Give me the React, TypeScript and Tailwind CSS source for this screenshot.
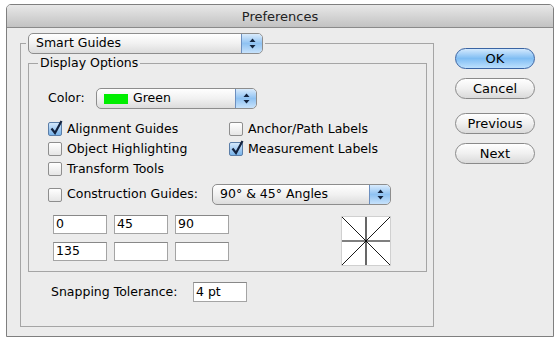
import React from "react";

function Arrows() {
  return (
    <span className="flex h-full w-[21px] shrink-0 items-center justify-center rounded-r-[4px] border-l border-[#6c8fbf] bg-gradient-to-b from-[#d9ebfc] via-[#8fc2f2] to-[#c7e2fb]">
      <svg width="7" height="11" viewBox="0 0 7 11">
        <path d="M3.5 0.5 L6.5 4 L0.5 4 Z" fill="#13233d" />
        <path d="M3.5 10.5 L6.5 7 L0.5 7 Z" fill="#13233d" />
      </svg>
    </span>
  );
}

function Popup({ width, children }: { width: string; children: React.ReactNode }) {
  return (
    <div
      className={`${width} flex h-[21px] items-stretch overflow-hidden rounded-[5px] border border-[#8d8d8d] bg-gradient-to-b from-white via-[#f1f1f1] to-[#dcdcdc]`}
    >
      <div className="flex flex-1 items-center gap-[5px] pl-[7px]">{children}</div>
      <Arrows />
    </div>
  );
}

function Checkbox({ checked }: { checked?: boolean }) {
  if (checked) {
    return (
      <span className="relative h-[14px] w-[14px] shrink-0 rounded-[2px] border border-[#5b7ea8] bg-gradient-to-b from-[#d4e8fb] to-[#78b3ea]">
        <svg className="absolute left-[1px] top-[-3px]" width="13" height="15" viewBox="0 0 13 15">
          <path d="M1.5 8.5 L5 13 L11.5 1" fill="none" stroke="#14233f" strokeWidth="2.2" />
        </svg>
      </span>
    );
  }
  return (
    <span className="h-[14px] w-[14px] shrink-0 rounded-[2px] border border-[#8e8e8e] bg-gradient-to-b from-white to-[#e6e6e6]" />
  );
}

function Check({ checked, label }: { checked?: boolean; label: string }) {
  return (
    <div className="flex h-[20px] items-center gap-[5px]">
      <Checkbox checked={checked} />
      <span>{label}</span>
    </div>
  );
}

function Field({ value }: { value?: string }) {
  return (
    <div className="flex h-[19px] w-[54px] items-center border border-[#a4a4a4] border-t-[#888] bg-white pl-[2px]">
      {value}
    </div>
  );
}

function Button({ label, primary }: { label: string; primary?: boolean }) {
  return (
    <div
      className={
        primary
          ? "flex h-[21px] w-[80px] items-center justify-center rounded-full border border-[#3a64a3] bg-gradient-to-b from-[#d3e9fd] via-[#7fbdf3] to-[#bde0fd] text-[13px]"
          : "flex h-[21px] w-[80px] items-center justify-center rounded-full border border-[#8a8a8a] bg-gradient-to-b from-white via-[#f0f0f0] to-[#dadada] text-[13px]"
      }
    >
      {label}
    </div>
  );
}

export default function App() {
  return (
    <div className="h-[343px] w-[558px] bg-white pl-[6px] pt-[4px] font-['DejaVu_Sans',sans-serif] text-[12.5px] leading-none text-black">
      <div className="flex h-[333px] w-[548px] flex-col overflow-hidden rounded-t-[5px] border border-[#7f7f7f] bg-[#ececec]">
        <div className="flex h-[23px] shrink-0 items-center justify-center border-b border-[#8a8a8a] bg-gradient-to-b from-[#e8e8e8] to-[#c2c2c2] text-[13px] text-[#222]">
          Preferences
        </div>

        <div className="flex flex-1">
          {/* Smart Guides group */}
          <fieldset className="ml-[13px] mt-[5px] h-[294px] w-[414px] border border-[#a5a5a5]">
            <legend className="ml-[5px] px-[2px]">
              <Popup width="w-[235px]">
                <span>Smart Guides</span>
              </Popup>
            </legend>

            <fieldset className="ml-[7px] mt-[1px] h-[217px] w-[399px] border border-[#a5a5a5]">
              <legend className="ml-[9px] px-[2px] leading-[16px]">Display Options</legend>

              <div className="ml-[19px] mt-[17px] flex h-[21px] items-center">
                <span className="w-[48px]">Color:</span>
                <Popup width="w-[161px]">
                  <span className="h-[10px] w-[24px] bg-[#00ee00]" />
                  <span>Green</span>
                </Popup>
              </div>

              <div className="ml-[19px] mt-[10px] flex">
                <div className="w-[181px]">
                  <Check checked label="Alignment Guides" />
                  <Check label="Object Highlighting" />
                  <Check label="Transform Tools" />
                </div>
                <div>
                  <Check label="Anchor/Path Labels" />
                  <Check checked label="Measurement Labels" />
                </div>
              </div>

              <div className="ml-[19px] mt-[5px] flex h-[21px] items-center">
                <div className="flex w-[164px] items-center gap-[5px]">
                  <Checkbox />
                  <span>Construction Guides:</span>
                </div>
                <Popup width="w-[179px]">
                  <span>90° &amp; 45° Angles</span>
                </Popup>
              </div>

              <div className="ml-[24px] mt-[10px] flex items-start">
                <div className="grid grid-cols-[54px_54px_54px] gap-x-[7px] gap-y-[8px]">
                  <Field value="0" />
                  <Field value="45" />
                  <Field value="90" />
                  <Field value="135" />
                  <Field />
                  <Field />
                </div>
                <div className="ml-[112px] mt-[1px] h-[50px] w-[50px] border border-[#d0d0d0] bg-white">
                  <svg width="48" height="48" viewBox="0 0 48 48">
                    <line x1="24" y1="0" x2="24" y2="48" stroke="#000" strokeWidth="1.2" />
                    <line x1="0" y1="24" x2="48" y2="24" stroke="#000" strokeWidth="1.2" />
                    <line x1="0" y1="0" x2="48" y2="48" stroke="#000" strokeWidth="0.9" />
                    <line x1="48" y1="0" x2="0" y2="48" stroke="#000" strokeWidth="0.9" />
                  </svg>
                </div>
              </div>
            </fieldset>

            <div className="ml-[30px] mt-[10px] flex h-[20px] items-center">
              <span className="w-[142px]">Snapping Tolerance:</span>
              <div className="flex h-[20px] w-[54px] items-center border border-[#a4a4a4] border-t-[#888] bg-white pl-[2px]">
                4 pt
              </div>
            </div>
          </fieldset>

          {/* Buttons */}
          <div className="ml-[21px] mt-[20px] flex flex-col">
            <Button primary label="OK" />
            <div className="mt-[9px]">
              <Button label="Cancel" />
            </div>
            <div className="mt-[14px]">
              <Button label="Previous" />
            </div>
            <div className="mt-[9px]">
              <Button label="Next" />
            </div>
          </div>
        </div>
      </div>
    </div>
  );
}
